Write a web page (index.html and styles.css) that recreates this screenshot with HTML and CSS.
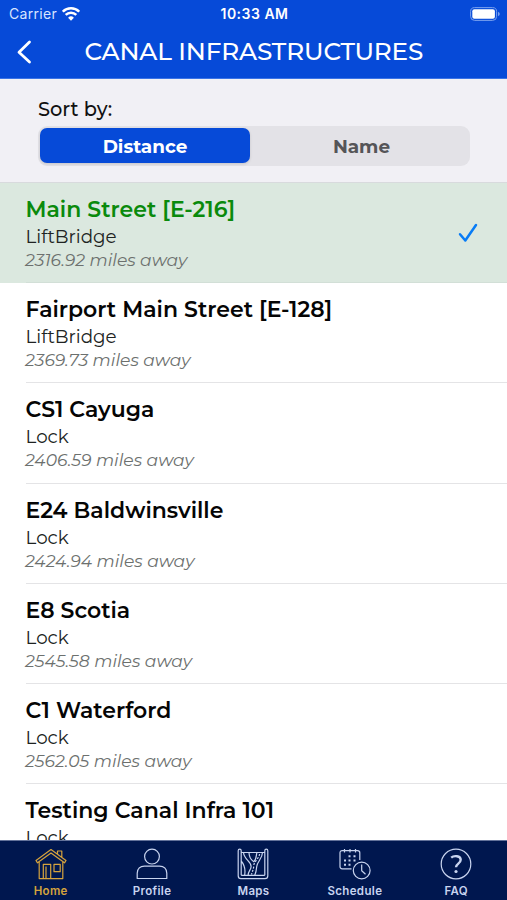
FILE: index.html
```html
<!DOCTYPE html>
<html lang="en">
<head>
<meta charset="utf-8">
<meta name="viewport" content="width=device-width, initial-scale=1">
<title>Canal Infrastructures</title>
<link rel="stylesheet" href="styles.css">
</head>
<body>
<div class="app">
  <header class="header">
    <div class="status">
      <div class="carrier"><span>Carrier</span>
        <svg width="18" height="14" viewBox="0 0 18 14" fill="none" stroke="#fff" stroke-width="2.5"><path d="M.8 4.7a11.6 11.6 0 0 1 16.4 0M3.7 7.9a7.5 7.5 0 0 1 10.6 0"/><path d="M9 13.8 6.1 10.7a4.1 4.1 0 0 1 5.8 0z" fill="#fff" stroke="none"/></svg>
      </div>
      <time class="clock">10:33 AM</time>
      <svg class="battery" width="30" height="14" viewBox="0 0 30 14"><rect x=".6" y=".6" width="26" height="12.8" rx="4" fill="none" stroke="#7aa0ef" stroke-width="1"/><rect x="2.3" y="2.3" width="22.6" height="9.4" rx="2" fill="#fff"/><path d="M28 4.8q1.8.7 1.8 2.2T28 9.2z" fill="#7aa0ef"/></svg>
    </div>
    <div class="nav">
      <svg class="back" width="16" height="24" viewBox="0 0 16 24" fill="none" stroke="#fff" stroke-width="2.8" stroke-linecap="round" stroke-linejoin="round"><path d="M13.5 2 3 12.3 13.5 22"/></svg>
      <h1>CANAL INFRASTRUCTURES</h1>
    </div>
  </header>
  <section class="sort">
    <div class="sort-label">Sort by:</div>
    <div class="segments">
      <div class="segment active">Distance</div>
      <div class="segment name">Name</div>
    </div>
  </section>
  <main class="list">
    <article class="row selected"><div class="info"><h2>Main Street [E-216]</h2><p class="kind">LiftBridge</p><p class="miles">2316.92 miles away</p></div>
      <svg class="check" width="20" height="20" viewBox="0 0 20 20" fill="none" stroke="#087cf6" stroke-width="2.5" stroke-linecap="round" stroke-linejoin="round"><path d="m2 11.3 5.3 6.2L18 2"/></svg>
    </article>
    <article class="row"><div class="info"><h2>Fairport Main Street [E-128]</h2><p class="kind">LiftBridge</p><p class="miles">2369.73 miles away</p></div></article>
    <article class="row"><div class="info"><h2>CS1 Cayuga</h2><p class="kind">Lock</p><p class="miles">2406.59 miles away</p></div></article>
    <article class="row"><div class="info"><h2>E24 Baldwinsville</h2><p class="kind">Lock</p><p class="miles">2424.94 miles away</p></div></article>
    <article class="row"><div class="info"><h2>E8 Scotia</h2><p class="kind">Lock</p><p class="miles">2545.58 miles away</p></div></article>
    <article class="row"><div class="info"><h2>C1 Waterford</h2><p class="kind">Lock</p><p class="miles">2562.05 miles away</p></div></article>
    <article class="row"><div class="info"><h2>Testing Canal Infra 101</h2><p class="kind">Lock</p></div></article>
  </main>
  <nav class="tabs">
    <div class="tab current">
      <svg viewBox="0 0 32 32"><path d="M1 12.5 16 1.5 31 12.5l-1.5 2.3L16 5 2.5 14.8zM4.2 14v16.6h23.6V14M22.5 6V3h4.3v6.2M8.3 30.5V16.3h7.4v14.2M11 30.5V18.5M19 16.3h6.2v7.4H19z"/></svg>
      <span>Home</span>
    </div>
    <div class="tab">
      <svg viewBox="0 0 32 32"><circle cx="16" cy="8.6" r="7.4"/><path d="M1.2 30.5v-5.2c0-4.4 3-7.2 7.2-7.2h15.2c4.2 0 7.2 2.8 7.2 7.2v5.2z"/></svg>
      <span>Profile</span>
    </div>
    <div class="tab">
      <svg viewBox="0 0 32 32"><path d="M4.2 4.5h23.6M4.2 27.3h23.6M4.2 27.3V2.7a1.5 1.5 0 0 0-3 0v25.1c0 1.6 1 2.9 2.8 2.9h24c1.8 0 2.8-1.3 2.8-2.9V2.7a1.5 1.5 0 0 0-3 0v24.6M6.5 4.5c.4 7 7.6 8.5 7.6 14 0 3.5-3 4.5-3 8.8M12 4.5c0 4.3 2.2 7.5 4.8 9.2 2.6-2.3 2.3-5.6 3.1-9.2M25.5 4.5c-.3 6.8-5.3 8.7-5.8 14.2-.3 3.6-.5 5.5-2 8.6M4.2 13c3.4 4 4.4 9 3.4 14.3"/><path d="M22.6 6c-.8 5-5.6 7.5-5.8 11.5-.2 3.7-1.5 5.8-2.3 9" stroke-dasharray="2 1.5"/></svg>
      <span>Maps</span>
    </div>
    <div class="tab">
      <svg viewBox="0 0 32 32"><path d="M12.5 20.8H3.2c-1.4 0-2.2-.8-2.2-2.2V4.8c0-1.4.8-2.2 2.2-2.2h15.4c1.4 0 2.2.8 2.2 2.2v7.1M5.5 1v3.5M11 1v3.5M16.5 1v3.5"/><circle cx="22.7" cy="22.5" r="8.4"/><path d="M22.7 16.5v6.2l3.8 3.5"/><path d="M9.5 8.3h2M14.5 8.3h2M5 12.5h2M9.5 12.5h2M14.5 12.5h2M5 16.7h2M9.5 16.7h2" stroke-width="2"/></svg>
      <span>Schedule</span>
    </div>
    <div class="tab">
      <svg viewBox="0 0 32 32"><circle cx="16" cy="16" r="14.8"/><path d="M11.2 9.6c2.7-2.3 9.5-2.1 9.5 2.2 0 3.8-4.7 3.8-4.7 7.5" stroke-width="2.4"/><circle cx="16" cy="23.5" r="1.6" fill="currentColor" stroke="none"/></svg>
      <span>FAQ</span>
    </div>
  </nav>
</div>
</body>
</html>
```
FILE: styles.css
```css
* { box-sizing: border-box; }
body { margin: 0; background: #fff; color: #111; font-family: Montserrat, Inter, "Open Sans", sans-serif; }
h1, h2, p { margin: 0; font-weight: 400; }
svg { display: block; }
.app { width: 507px; height: 900px; display: flex; flex-direction: column; overflow: hidden; }
.header { height: 79px; flex: none; background: #064ad8; border-bottom: 1px solid #3a73e6; color: #fff; }
.status { height: 27px; display: grid; grid-template-columns: 1fr auto 1fr; align-items: center; padding: 0 7px 0 9px; font-family: Inter, sans-serif; font-size: 14px; }
.carrier { display: flex; align-items: center; gap: 5px; color: #d8e4ff; letter-spacing: .3px; }
.clock { font-weight: 600; font-size: 14px; letter-spacing: .5px; }
.battery { justify-self: end; }
.nav { height: 50px; display: grid; grid-template-columns: 84.5px 1fr; align-items: center; }
.back { margin-left: 16px; }
h1 { font-size: 24.7px; line-height: 30px; padding-bottom: 2px; white-space: nowrap; font-weight: 500; letter-spacing: -.15px; }
.sort { height: 104px; flex: none; padding: 18px 37px 0 38px; background: #f1f0f5; border-bottom: 1px solid #d8dadd; }
.sort-label { height: 29px; line-height: 25px; font-size: 19.4px; font-weight: 500; }
.segments { height: 40px; padding: 2px; display: grid; grid-template-columns: 210px 1fr; border-radius: 9px; background: #e3e2e7; }
.segment { display: flex; align-items: center; justify-content: center; height: 35px; padding-top: 1px; border-radius: 7px; color: #555558; font-size: 18.4px; font-weight: 700; }
.segment.active { background: #064ad8; color: #fff; box-shadow: 0 1px 3px #0002; }
.segment.name { padding-left: 5px; }
.list { flex: 1; min-height: 0; overflow: hidden; }
.row { height: 100.2px; padding-left: 25.5px; display: flex; background: #fff; }
.info { flex: 1; padding-top: 13px; border-bottom: 1px solid #e4e4e6; white-space: nowrap; }
.row.selected { background: #dbe8df; position: relative; }
.selected .info { border-color: #d2dfd7; }
.check { position: absolute; left: 458px; top: 40px; }
h2 { font-size: 22px; line-height: 28px; font-weight: 600; color: #050505; }
.selected h2 { color: #0a8a0c; }
.kind { font-size: 18.3px; line-height: 25px; color: #202322; }
.miles { margin-left: -.5px; font-size: 17.15px; line-height: 21px; font-style: italic; color: #6c706e; }
.tabs { flex: none; height: 60px; background: #00174f; border-top: 1px solid #63729a; display: grid; grid-template-columns: repeat(5, 1fr); color: #c8d4ef; }
.tab { display: flex; flex-direction: column; align-items: center; padding-top: 7px; font-family: Inter, sans-serif; font-size: 11.5px; line-height: 18px; font-weight: 600; letter-spacing: .35px; }
.tab svg { width: 32px; height: 32px; margin-bottom: 2px; fill: none; stroke: currentColor; stroke-width: 1.2; stroke-linejoin: round; }
.tab.current { color: #d5a33d; }
```
